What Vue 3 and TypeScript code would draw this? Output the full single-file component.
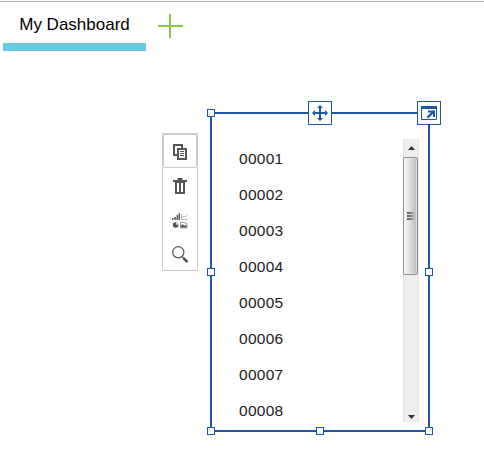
<script setup lang="ts">
import { ref } from 'vue'

const items: string[] = ['00001', '00002', '00003', '00004', '00005', '00006', '00007', '00008']
const selected = ref<string | null>(null)
const handles: string[] = ['nw', 'w', 'e', 'sw', 's', 'se']
</script>

<template>
  <main class="page">
    <header class="tabs">
      <button class="tab">My Dashboard</button>
      <button class="add" aria-label="Add dashboard">
        <svg width="25" height="24" viewBox="0 0 25 24">
          <path d="M0 11h25v2H0zM11 0h2v24h-2z" fill="#8dc63f" />
        </svg>
      </button>
    </header>
    <section class="canvas">
      <nav class="toolbar">
        <button class="tool active" aria-label="Duplicate">
          <svg width="14" height="16" viewBox="0 0 14 16" fill="none" stroke="#555" stroke-width="2">
            <path d="M4 11H1V1h8v3" />
            <path d="M5 5h8v10H5z" fill="#fff" />
            <path d="M7 7.5h4M7 9.5h4M7 11.5h4" stroke-width="1" />
          </svg>
        </button>
        <button class="tool" aria-label="Delete">
          <svg width="14" height="16" viewBox="0 0 14 16" fill="none" stroke="#555" stroke-width="2">
            <path d="M0 3h14" />
            <path d="M4.5 1h5M3 4v11h8V4M7 4v11" />
            <path d="M2 4.5h10" stroke-width="1" />
          </svg>
        </button>
        <button class="tool chart" aria-label="Change visualization">
          <svg width="16" height="16" viewBox="0 0 16 16">
            <path d="M0 5h1.5v2H0zM2.3 4h1.5v3H2.3zM4.6 2h1.5v5H4.6zM6.6 0h1.3v7H6.6z" fill="#555" />
            <path d="M9.5 1v5.5h6M10 5l2-2 1.3 1L15.5 2" fill="none" stroke="#aaa" stroke-width=".8" />
            <circle cx="3.6" cy="12" r="2.8" fill="#555" />
            <path d="M4 11.8V9.3a2.6 2.6 0 0 1 2.5 2.5z" fill="#ddd" />
            <path d="M8.5 9.5V15H15v-4.3L12 9.4z" fill="none" stroke="#888" stroke-width=".8" />
            <path d="M9 14.5v-2l1.5-1.2 2 1.5 1.2-.8 1 1v1.5z" fill="#555" />
          </svg>
        </button>
        <button class="tool" aria-label="Search">
          <svg width="16" height="17" viewBox="0 0 16 17" fill="none" stroke="#555">
            <circle cx="6.3" cy="6.3" r="5.6" stroke-width="1.2" />
            <path d="M10.3 10.7l1.4 1.4" stroke-width="1.2" />
            <path d="M11.2 11.8l4.3 4.2" stroke-width="2.5" />
          </svg>
        </button>
      </nav>

      <article class="widget">
        <ul class="list">
          <li v-for="item in items" :key="item" :aria-selected="selected === item" @click="selected = item">{{ item }}</li>
        </ul>
        <div class="scrollbar">
          <svg class="arrow" width="7" height="4" viewBox="0 0 7 4"><path d="M0 4L3.5 0 7 4z" fill="#333" /></svg>
          <div class="thumb"><i></i><i></i><i></i></div>
          <svg class="arrow" width="7" height="4" viewBox="0 0 7 4"><path d="M0 0h7L3.5 4z" fill="#333" /></svg>
        </div>
        <span v-for="h in handles" :key="h" class="handle" :class="h"></span>
        <button class="grip move" aria-label="Move">
          <svg width="16" height="16" viewBox="0 0 16 16" fill="#1f57a6">
            <path d="M7 1h2v14H7zM1 7h14v2H1z" />
            <path d="M8 0l3 3H5zM8 16l3-3H5zM0 8l3-3v6zM16 8l-3-3v6z" />
          </svg>
        </button>
        <button class="grip expand" aria-label="Expand">
          <svg width="16" height="14" viewBox="0 0 16 14">
            <path d="M.5.5h15v13H.5z" fill="#fff" stroke="#1f57a6" />
            <path d="M0 0h16v3H0z" fill="#1f57a6" />
            <path d="M7 4.5h7V11h-2V6.5H7z" fill="#1f57a6" />
            <path d="M13 5.2L6.5 11.6" stroke="#1f57a6" stroke-width="2.4" />
          </svg>
        </button>
      </article>
    </section>
  </main>
</template>

<style>
body {
  background: #fff;
}
</style>

<style scoped>
.page {
  box-sizing: border-box;
  height: 466px;
  padding-top: 1px;
  overflow: hidden;
  font-family: "Liberation Sans", Arial, sans-serif;
}
button {
  display: flex;
  align-items: center;
  justify-content: center;
  box-sizing: border-box;
  margin: 0;
  padding: 0;
  border: 0;
  background: #fff;
  font: inherit;
}
.tabs {
  display: flex;
  box-sizing: border-box;
  height: 50px;
  padding-left: 3px;
  border-top: 1px solid #b0b8b4;
}
.tab {
  width: 143px;
  height: 49px;
  padding-top: 5px;
  border-bottom: 8px solid #68cae0;
  color: #000;
  font-size: 17px;
  line-height: 20px;
  white-space: nowrap;
}
.add {
  width: 25px;
  height: 24px;
  margin: 12px 0 0 12px;
}
.canvas {
  position: relative;
  height: 415px;
}
.toolbar {
  position: absolute;
  left: 162px;
  top: 82px;
  display: flex;
  flex-direction: column;
  box-sizing: border-box;
  width: 36px;
  height: 138px;
  border: 1px solid #ccc;
}
.tool {
  width: 34px;
  height: 34px;
  padding-top: 2px;
}
.tool.active {
  border: 1px solid #ccc;
  border-radius: 2px;
}
.tool.chart {
  padding-top: 4px;
}
.widget {
  position: absolute;
  left: 210px;
  top: 61px;
  display: flex;
  box-sizing: border-box;
  width: 220px;
  height: 320px;
  padding: 25px 9px 8px 27px;
  border: 2px solid #1f57a6;
}
.list {
  flex: 1;
  height: 283px;
  margin: 0;
  padding: 2px 0 0;
  box-sizing: border-box;
  overflow: hidden;
  list-style: none;
  color: #222;
  font-size: 15.5px;
  letter-spacing: 0.28px;
  line-height: 36px;
}
.scrollbar {
  display: flex;
  flex-direction: column;
  align-items: center;
  justify-content: space-between;
  box-sizing: border-box;
  width: 16px;
  height: 283px;
  padding: 7px 0 3px;
  background: linear-gradient(90deg, #e3e3e3, #efefef 3px, #efefef 14px, #e6e6e6);
}
.thumb {
  display: flex;
  flex-direction: column;
  align-items: center;
  justify-content: center;
  gap: 1px;
  box-sizing: border-box;
  width: 15px;
  height: 118px;
  margin: 7px 1px auto 0;
  border: 1px solid #8e8e8e;
  border-radius: 2px;
  background: linear-gradient(90deg, #f5f5f5, #e6e6e6 4px, #c9c9c9 10px, #b9b9b9);
  box-shadow: inset 0 0 0 1px #ffffff66;
}
.thumb i {
  width: 7px;
  height: 2px;
  background: linear-gradient(90deg, #555, #aaa);
}
.handle {
  position: absolute;
  box-sizing: border-box;
  width: 8px;
  height: 8px;
  border: 1px solid #1f57a6;
  background: #fff;
}
.nw { left: -5px; top: -5px; }
.w { left: -5px; top: 154px; }
.e { right: -5px; top: 154px; }
.sw { left: -5px; bottom: -5px; }
.s { left: 104px; bottom: -5px; }
.se { right: -5px; bottom: -5px; }
.grip {
  position: absolute;
  top: -13px;
  width: 24px;
  height: 24px;
  border: 1px solid #1f57a6;
}
.move { left: 96px; }
.expand { right: -13px; }
</style>
